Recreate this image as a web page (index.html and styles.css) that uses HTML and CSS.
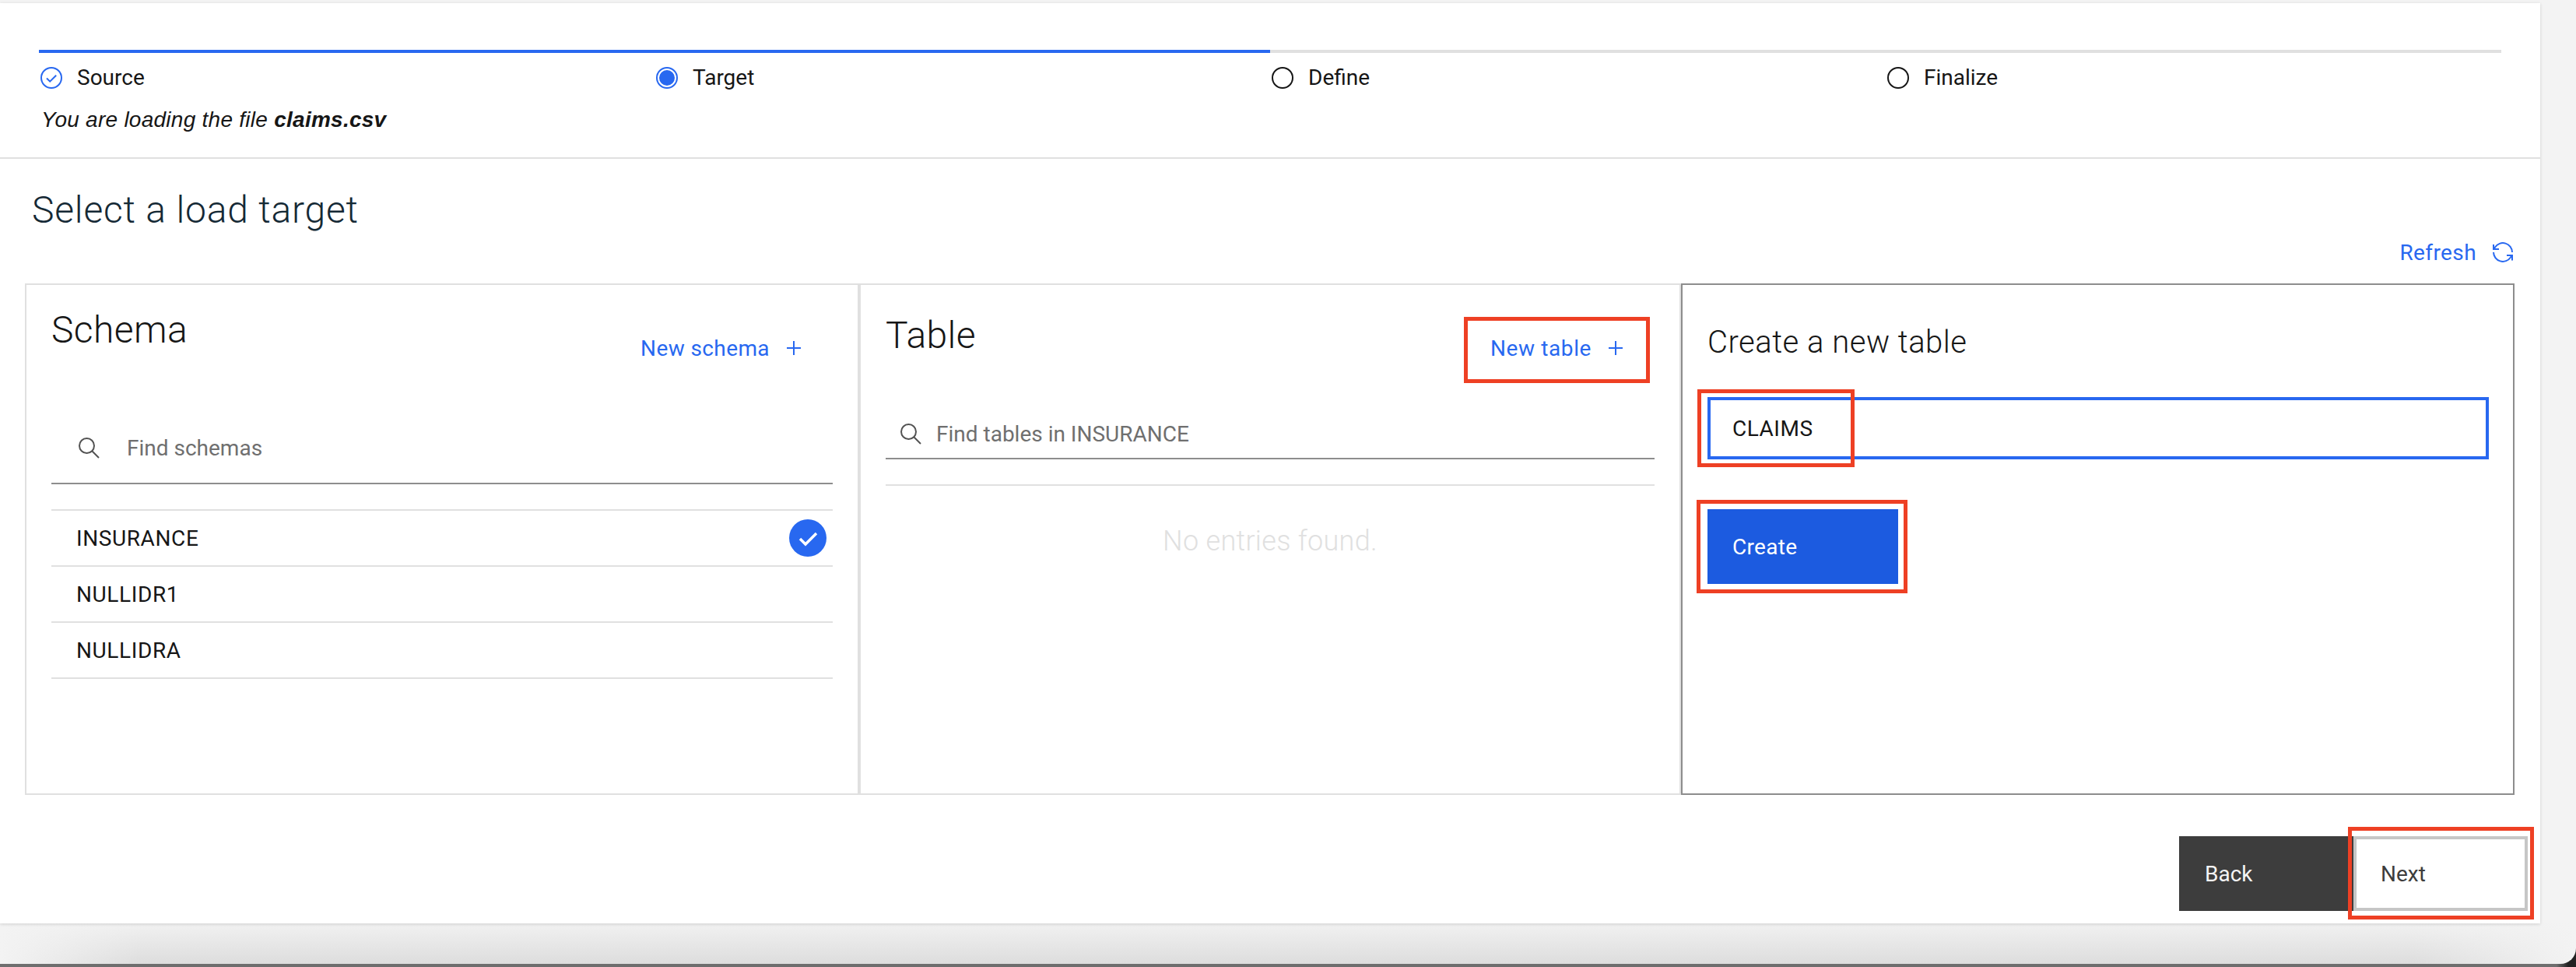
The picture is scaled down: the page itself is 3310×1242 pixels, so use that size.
FILE: index.html
```html
<!DOCTYPE html>
<html lang="en">
<head>
    <meta charset="UTF-8">
    <title>Select a load target</title>
    <link rel="stylesheet" href="styles.css">
</head>
<body>
    <div class="window">
        <div class="steps-area">
            <div class="steps">
                <div class="step step-done">
                    <svg class="step-icon" viewBox="0 0 28 28"><circle cx="14" cy="14" r="13" fill="none" stroke="#2868f0" stroke-width="2"/><path d="M8 14.5l4.2 4.2 8-8" fill="none" stroke="#2868f0" stroke-width="2"/></svg>
                    <span>Source</span>
                </div>
                <div class="step step-done">
                    <svg class="step-icon" viewBox="0 0 28 28"><circle cx="14" cy="14" r="13" fill="none" stroke="#2868f0" stroke-width="2"/><circle cx="14" cy="14" r="10" fill="#2868f0"/></svg>
                    <span>Target</span>
                </div>
                <div class="step">
                    <svg class="step-icon" viewBox="0 0 28 28"><circle cx="14" cy="14" r="13" fill="none" stroke="#161616" stroke-width="2"/></svg>
                    <span>Define</span>
                </div>
                <div class="step">
                    <svg class="step-icon" viewBox="0 0 28 28"><circle cx="14" cy="14" r="13" fill="none" stroke="#161616" stroke-width="2"/></svg>
                    <span>Finalize</span>
                </div>
            </div>
            <p class="file-note">You are loading the file <b>claims.csv</b></p>
        </div>

        <h1 class="page-title">Select a load target</h1>

        <div class="refresh-row">
            <a class="link">Refresh</a>
            <svg class="refresh-icon" viewBox="0 0 26 26" fill="none" stroke="#2868f0" stroke-width="2"><path d="M25 13A12 12 0 0 0 3 6.5L1.5 9"/><path d="M1 3v6h7"/><path d="M1 13A12 12 0 0 0 23 19.5L24.5 17"/><path d="M25 23.5v-6.500h-7"/></svg>
        </div>

        <div class="panels">
            <section class="panel panel-schema">
                <div class="panel-head">
                    <h2 class="panel-title">Schema</h2>
                    <a class="link add-link">New schema <span class="plus"></span></a>
                </div>
                <div class="search">
                    <svg class="search-icon" viewBox="0 0 28 28" fill="none" stroke="#525252" stroke-width="2"><circle cx="11.5" cy="11.5" r="9.5"/><path d="M18.5 18.5l8.500 8.500"/></svg>
                    <span>Find schemas</span>
                </div>
                <ul class="list">
                    <li>INSURANCE
                        <svg class="check" viewBox="0 0 48 48"><circle cx="24" cy="24" r="24" fill="#2868f0"/><path d="M14 25l7 7 14-14" fill="none" stroke="#fff" stroke-width="3.5"/></svg>
                    </li>
                    <li>NULLIDR1</li>
                    <li>NULLIDRA</li>
                </ul>
            </section>

            <section class="panel panel-table">
                <div class="panel-head">
                    <h2 class="panel-title">Table</h2>
                    <a class="link add-link">New table <span class="plus"></span></a>
                </div>
                <span class="mark mark-new-table"></span>
                <div class="search">
                    <svg class="search-icon" viewBox="0 0 28 28" fill="none" stroke="#525252" stroke-width="2"><circle cx="11.5" cy="11.5" r="9.5"/><path d="M18.5 18.5l8.500 8.500"/></svg>
                    <span>Find tables in INSURANCE</span>
                </div>
                <div class="empty">No entries found.</div>
            </section>

            <section class="panel panel-create">
                <h2 class="create-title">Create a new table</h2>
                <div class="name-field">CLAIMS</div>
                <span class="mark mark-name"></span>
                <button class="btn-create">Create</button>
                <span class="mark mark-create"></span>
            </section>
        </div>

        <div class="footer">
            <button class="btn-back">Back</button>
            <button class="btn-next">Next</button>
            <span class="mark mark-next"></span>
        </div>
    </div>
    <div class="desk">
        <div class="shadow-band"></div>
    </div>
</body>
</html>
```

FILE: styles.css
```css
* {
    box-sizing: border-box;
}

html, body {
    margin: 0;
    height: 1242px;
    overflow: hidden;
}

body {
    background-color: #f3f3f3;
    font-family: "Roboto", "Liberation Sans", sans-serif;
    font-size: 28px;
    color: #161616;
    padding-top: 4px;
}

.window {
    position: relative;
    width: 3264px;
    height: 1182px;
    background-color: #fff;
    box-shadow: 0 1px 4px rgba(0, 0, 0, 0.15);
}

/* progress steps */
.steps-area {
    height: 200px;
    padding: 60px 50px 0;
    border-bottom: 2px solid #e0e0e0;
}

.steps {
    display: grid;
    grid-template-columns: repeat(4, 791px);
}

.step {
    display: flex;
    align-items: center;
    gap: 19px;
    height: 28px;
    padding-left: 2px;
    padding-top: 18px;
    border-top: 4px solid #e0e0e0;
    box-sizing: content-box;
    line-height: 28px;
}

.step-done {
    border-top-color: #2868f0;
}

.step-icon {
    width: 28px;
    height: 28px;
}

.file-note {
    margin: 0;
    padding: 24px 3px 0;
    font-family: "Liberation Sans", sans-serif;
    font-style: italic;
    font-size: 28px;
    letter-spacing: 0.26px;
    line-height: 32px;
}

/* title and refresh */
.page-title {
    margin: 0;
    padding: 40px 0 0 41px;
    height: 102px;
    font-size: 48px;
    line-height: 52px;
    font-weight: 300;
    letter-spacing: 0.8px;
    color: #152935;
}

.refresh-row {
    display: flex;
    align-items: center;
    justify-content: flex-end;
    gap: 21px;
    width: 3229px;
    height: 58px;
    padding-bottom: 22px;
}

.link {
    color: #2868f0;
    letter-spacing: 0.4px;
}

.refresh-icon {
    width: 26px;
    height: 26px;
}

/* panels */
.panels {
    display: flex;
    width: 3199px;
    height: 657px;
    margin-left: 32px;
}

.panel {
    position: relative;
    border: 2px solid #e0e0e0;
}

.panel-schema {
    width: 1072px;
    padding: 0 32px;
}

.panel-table {
    width: 1056px;
    padding: 0 32px;
}

.panel-create {
    width: 1071px;
    border-color: #8d8d8d;
    padding: 0 32px;
}

.panel-head {
    display: flex;
    justify-content: space-between;
}

.panel-title {
    margin: 0;
    font-size: 48px;
    font-weight: 300;
    letter-spacing: 0.4px;
    line-height: 56px;
}

.panel-schema .panel-title {
    padding-top: 30px;
}

.panel-table .panel-title {
    padding-top: 37px;
}

.add-link {
    display: flex;
    align-items: center;
    gap: 22px;
    height: 36px;
    margin-top: 63px;
    margin-right: 41px;
}

.panel-table .add-link {
    letter-spacing: 0.6px;
}

.plus {
    position: relative;
    width: 18px;
    height: 18px;
    background:
        linear-gradient(#2868f0, #2868f0) center / 18px 2px no-repeat,
        linear-gradient(#2868f0, #2868f0) center / 2px 18px no-repeat;
}

.search {
    display: flex;
    align-items: center;
    border-bottom: 2px solid #8d8d8d;
    color: #6f6f6f;
}

.panel-schema .search {
    height: 92px;
    margin-top: 65px;
    padding-left: 34px;
    gap: 35px;
}

.panel-table .search {
    height: 64px;
    margin-top: 61px;
    padding-left: 18px;
    gap: 19px;
}

.search-icon {
    width: 28px;
    height: 28px;
}

.list {
    list-style: none;
    margin: 32px 0 0;
    padding: 0;
    border-top: 2px solid #e0e0e0;
    letter-spacing: 0.6px;
}

.list li {
    display: flex;
    align-items: center;
    justify-content: space-between;
    height: 72px;
    padding: 0 8px 0 32px;
    border-bottom: 2px solid #e0e0e0;
}

.check {
    width: 48px;
    height: 48px;
}

.empty {
    margin-top: 32px;
    padding-top: 51px;
    border-top: 2px solid #e0e0e0;
    text-align: center;
    font-size: 36px;
    font-weight: 300;
    letter-spacing: 0.3px;
    line-height: 40px;
    color: #e0e0e0;
}

/* create form */
.create-title {
    margin: 0;
    padding-top: 50px;
    font-size: 40px;
    font-weight: 300;
    letter-spacing: 0.5px;
    line-height: 48px;
}

.name-field {
    display: flex;
    align-items: center;
    width: 1004px;
    height: 80px;
    margin-top: 46px;
    padding-left: 28px;
    border: 4px solid #2868f0;
    letter-spacing: 0.5px;
}

.btn-create {
    display: block;
    width: 245px;
    height: 96px;
    margin-top: 64px;
    padding: 0 0 0 32px;
    border: none;
    text-align: left;
    font: inherit;
    letter-spacing: 0.3px;
    color: #fff;
    background-color: #1c5be0;
}

/* bottom buttons */
.footer {
    display: flex;
    justify-content: flex-end;
    width: 3248px;
    margin-top: 53px;
}

.footer button {
    width: 224px;
    height: 96px;
    text-align: left;
    font: inherit;
    color: #3d3d3d;
}

.btn-back {
    width: 223px;
    padding: 0 0 0 33px;
    border: none;
    color: #f4f4f4 !important;
    background-color: #3d3d3d;
}

.btn-next {
    padding: 0 0 0 31px;
    border: 4px solid #c6c6c6;
    background-color: #fff;
}

/* red annotation boxes drawn over the screenshot */
.mark {
    position: absolute;
    border: 5px solid #ee4024;
}

.mark-new-table {
    left: 775px;
    top: 41px;
    width: 239px;
    height: 85px;
}

.mark-name {
    left: 19px;
    top: 134px;
    width: 202px;
    height: 100px;
}

.mark-create {
    left: 18px;
    top: 276px;
    width: 271px;
    height: 120px;
}

.mark-next {
    right: 8px;
    bottom: 5px;
    width: 239px;
    height: 119px;
}

/* strip of desktop under the window */
.desk {
    height: 56px;
    background: linear-gradient(90deg, #6e6e6e 3285px, #222 3300px);
}

.shadow-band {
    height: 52px;
    border-bottom-right-radius: 20px;
    background:
        linear-gradient(90deg, #f3f3f3, rgba(243, 243, 243, 0) 180px, rgba(243, 243, 243, 0) 3100px, #f3f3f3),
        linear-gradient(#f1f1f1, #dddddd);
}
```
